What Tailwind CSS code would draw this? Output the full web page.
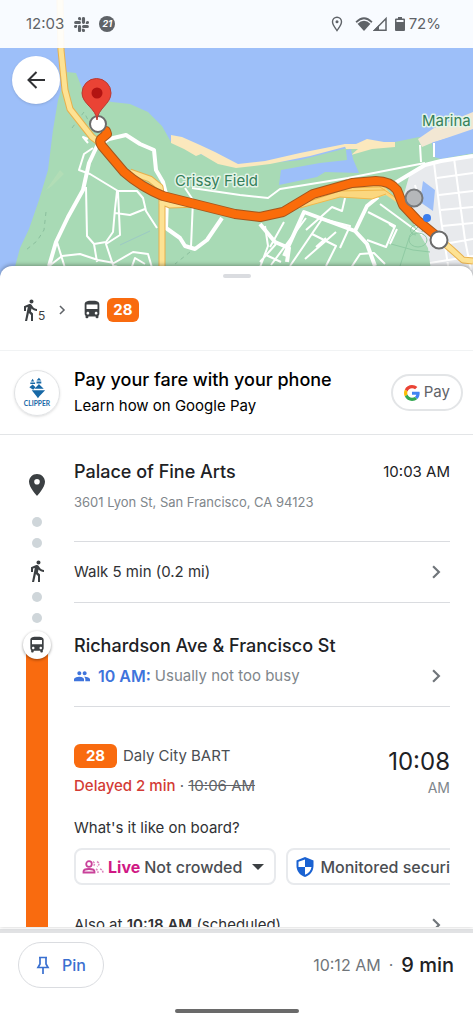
<!DOCTYPE html>
<html lang="en">
<head>
    <meta charset="UTF-8">
    <meta name="viewport" content="width=device-width, initial-scale=1.0">
    <title>Transit directions</title>
    <script src="https://cdn.jsdelivr.net/npm/@tailwindcss/browser@4"></script>
</head>
<body class="flex h-screen flex-col overflow-hidden bg-white font-['Inter',sans-serif] text-[#202124]">

    <!-- Shared icons -->
    <svg class="hidden" aria-hidden="true">
        <symbol id="walk" viewBox="0 0 24 24"><path d="M13.5 5.5c1.1 0 2-.9 2-2s-.9-2-2-2-2 .9-2 2 .9 2 2 2zM9.8 8.9L7 23h2.100l1.800-8 2.100 2v6h2v-7.500l-2.100-2 .600-3C14.800 12 16.800 13 19 13v-2c-1.900 0-3.500-1-4.300-2.400l-1-1.600c-.400-.600-1-1-1.700-1-.300 0-.500.100-.800.100L6 8.300V13h2V9.600l1.800-.700"/></symbol>
        <symbol id="bus" viewBox="0 0 24 24"><path d="M4 16c0 .88.390 1.670 1 2.220V20c0 .550.450 1 1 1h1c.550 0 1-.450 1-1v-1h8v1c0 .550.450 1 1 1h1c.550 0 1-.450 1-1v-1.780c.610-.550 1-1.340 1-2.220V6c0-3.500-3.580-4-8-4s-8 .500-8 4v10zm3.500 1c-.830 0-1.500-.670-1.500-1.500S6.670 14 7.500 14s1.500.670 1.500 1.500S8.330 17 7.500 17zm9 0c-.830 0-1.500-.670-1.500-1.500s.670-1.500 1.500-1.500 1.500.670 1.500 1.500-.670 1.500-1.500 1.500zM18 11H6V6h12v5z"/></symbol>
        <symbol id="chevron" viewBox="0 0 24 24"><path d="M8.500 5l7 7-7 7" fill="none" stroke="currentColor" stroke-width="2.600"/></symbol>
    </svg>

    <!-- Map with the status bar on top -->
    <header class="relative h-[278px] shrink-0">
        <svg class="absolute inset-0 h-full w-full" viewBox="0 0 473 278" preserveAspectRatio="xMidYMid slice" fill="none" role="img" aria-label="Route map">
            <path fill="#9dbff9" d="M0 0H473V278H0z"/>
            <path fill="#a8dab5" d="M67 72L76 73 82 88 92 98 112 102 130 104 148 112 162 126 171 142 205 156 240 166 300 160 347 148 395 142 419 137 432 142 434 157 441 159 473 153V278H12L20 248 29 229 39 200 48 170 53 130 58 100z"/>
            <path fill="#b9dfb8" opacity=".6" d="M46 190L60 170 64 174 52 186z"/>
            <!-- beach and lagoon -->
            <path fill="#fbe8bd" d="M171 135L182 137 200 145 215 152 238 164 265 161 300 153 345 144 348 146 310 156 270 164 236 168 218 164 201 154 196 156 184 149 171 143z"/>
            <path fill="#fbe8bd" d="M344 144L356 144 367 139 384 142 395 142 395 147 372 149 351 155 358 149 346 149z"/>
            <path fill="#9dbff9" d="M281 170L320 163 347 160 346 150 351 149 353 159 359 173 325 172 317 177 279 185z"/>
            <path fill="#f2e7d3" d="M418 139L434 128 473 112V131L434 142 422 147z"/>
            <path fill="#9dbff9" d="M432 143L473 129V153L441 158z"/>
            <!-- city blocks -->
            <path fill="#e8eaed" d="M410 173L434 161 473 154V278H432L428 248 410 218 404 194z"/>
            <path fill="#9dbff9" d="M423 181L435 190 433 211 420 202z"/>
            <g stroke="#fff" stroke-width="2">
                <path d="M434 163L441 220 450 278M454 158L465 240 471 270M437 178L473 173M439 195L473 191M441 210L473 207M442 226L473 223M444 244L473 239M430 263L473 256M419 200L415 185"/>
            </g>
            <!-- park roads -->
            <g stroke="#fff" stroke-linejoin="round" stroke-width="2">
                <path d="M88 139L83 137 88 143M93 148L84 154 79 170 90 174 118 191 137 191 143 198 146 211 157 228M86 187L87 236 94 244 106 242 113 232 115 209 117 191M115 213L130 215 145 209M118 192L120 235 106 244 113 265 125 278M94 244L97 262M57 242L65 268M48 267L62 256 80 254 98 260 114 263 133 252 148 254 155 278M185 188L193 200 191 247M192 188L240 195 268 198 280 189 348 178 425 163M115 266L130 272 135 258 145 264"/>
                <path d="M348 178V183M420 145L421 162M434 143V157M380 204L418 232 423 235M306 218L271 265M322 219L290 266M345 198L342 211 332 207 306 230M312 234L336 246 326 266M284 222L270 247M276 244L260 262M265 226L268 246 259 270M266 255L281 262M326 238L316 247M368 212L395 226 386 247 367 240M389 224L395 228M323 219L350 226 340 248M305 259L336 232M345 277L360 254 374 253 385 264M397 229L390 244"/>
            </g>
            <g stroke="#fff" stroke-linejoin="round" stroke-width="4">
                <path d="M49 266L56 242 68 217 83 190 89 163 97 146 109 139 126 135 140 144 154 150 156 170 163 182 167 198 166 228 180 238 185 246 195 249 207 240 222 218"/>
                <path d="M260 224L275 242 289 248 287 262M284 256L304 212 355 231 367 244 375 266M355 231L367 206 378 197"/>
                <path d="M395 183L425 165 441 161 473 156"/>
            </g>
            <g stroke="#8fcaa3" stroke-width="1"><path d="M391 244L413 250 430 252M400 266L410 235 420 225M409 240a9 7 0 1 0 18 0a9 7 0 1 0-18 0M416 235a6 5 0 1 1 6-3"/></g>
            <path stroke="#8abf9d" stroke-dasharray="4 4" d="M46 212L44 230 37 241 26 250M72 128L84 112 88 120M190 252L175 264"/>
            <path stroke="#9cc9c4" d="M120 245L150 231"/>
            <!-- highway -->
            <g stroke-linejoin="round">
                <path stroke="#e8b04c" stroke-width="7" d="M60 0L61 50 65 90 70 109 92 137 104 146M130 172L150 179 160 187 162 200V278M160 201L170 205 200 204M436 236L452 250 463 260 473 261"/>
                <path stroke="#fde293" stroke-width="5" d="M60 0L61 50 65 90 70 109 92 137 104 146M130 172L150 179 160 187 162 200V278M160 201L170 205 200 204M436 236L452 250 463 260 473 261"/>
                <path fill="#fbd77f" d="M262 214L290 206 330 186 380 182 402 206 386 195 372 199 340 197 300 208 262 218z"/>
                <path stroke="#f2b84b" stroke-width="1" d="M262 213L295 206 340 191 385 190M300 208L340 197 372 199 386 194M310 199L345 188 380 187 396 198"/>
            </g>
            <!-- bus route -->
            <g stroke-linecap="round" stroke-linejoin="round">
                <path stroke="#a4561d" stroke-width="10" d="M106 131L107 134 101 139Q99 142 102 146L124 172Q141 187 163 196L235 214 260 217 283 212 313 194 352 183 376 181Q390 181 397 190L403 205 417 220 439 238"/>
                <path stroke="#fa6c0a" stroke-width="8" d="M106 131L107 134 101 139Q99 142 102 146L124 172Q141 187 163 196L235 214 260 217 283 212 313 194 352 183 376 181Q390 181 397 190L403 205 417 220 439 238"/>
            </g>
            <circle cx="98" cy="124" r="8" fill="#fff" stroke="#6b6b6b" stroke-width="2"/>
            <circle cx="414" cy="198" r="8.500" fill="#b5b7ba" stroke="#77797c" stroke-width="2"/>
            <circle cx="439" cy="240" r="8.500" fill="#fff" stroke="#6b6b6b" stroke-width="2"/>
            <circle cx="427" cy="218" r="4" fill="#3b7ded"/>
            <path fill="#ea4335" stroke="#b93a32" d="M97 120C96 108 82 104 82 93a14.500 14.500 0 0 1 29 0C111 104 98 108 97 120z"/>
            <circle cx="97" cy="93" r="5.500" fill="#b31412"/>
            <g font-family="Inter, sans-serif" font-size="15" fill="#35805a" stroke="#e4f4e8" stroke-width="3" stroke-linejoin="round" paint-order="stroke">
                <text x="175" y="186">Crissy Field</text>
                <text x="422" y="126">Marina</text>
            </g>
        </svg>

        <div class="relative flex h-12 items-center justify-between bg-white/93 pr-8 pl-[26px] text-[15px] text-[#5f6368]">
            <div class="flex items-center gap-2.5">
                <span>12:03</span>
                <svg class="size-[15px]" viewBox="0 0 24 24" fill="#5f6368" aria-label="Slack"><path d="M5.042 15.165a2.528 2.528 0 1 1-2.520-2.523h2.520v2.523zm1.271 0a2.527 2.527 0 0 1 5.042 0v6.313a2.528 2.528 0 1 1-5.042 0v-6.313zM8.834 5.042a2.528 2.528 0 1 1 2.521-2.520v2.520H8.834zm0 1.271a2.528 2.528 0 0 1 0 5.042H2.522a2.528 2.528 0 0 1 0-5.042h6.312zM18.956 8.834a2.528 2.528 0 1 1 2.522 2.521h-2.522V8.834zm-1.268 0a2.528 2.528 0 0 1-5.043 0V2.522a2.528 2.528 0 0 1 5.043 0v6.312zM15.165 18.956a2.528 2.528 0 1 1-2.520 2.522v-2.522h2.520zm0-1.268a2.527 2.527 0 0 1 0-5.043h6.313a2.528 2.528 0 0 1 0 5.043h-6.313z"/></svg>
                <span class="flex size-4 items-center justify-center rounded-full bg-[#5f6368] text-[9px] font-bold text-white italic">21</span>
            </div>
            <div class="flex items-center gap-1">
                <svg class="mr-2 h-4 w-3" viewBox="0 0 12 16" fill="none" stroke="#5f6368" stroke-width="1.400" aria-label="Location"><path d="M6 14.500C4 11.500 1.500 9 1.500 5.800a4.500 4.500 0 0 1 9 0C10.500 9 8 11.500 6 14.500z"/><circle cx="6" cy="5.800" r="1.500" fill="#5f6368" stroke="none"/></svg>
                <svg class="-mr-1 h-4 w-[18px]" viewBox="0 0 18 16" aria-label="Wi-Fi"><path fill="#5f6368" d="M.500 5.500Q9-3 17.500 5.500L9 15z"/><path stroke="#f8faff" stroke-width="1.200" d="M2 7.500Q9 .500 16 7.500" fill="none"/></svg>
                <svg class="h-4 w-3.5" viewBox="0 0 14 16" aria-label="Signal"><path d="M1.500 14.300H13V2.500z" fill="none" stroke="#5f6368" stroke-width="1.500"/><path fill="#5f6368" d="M0 15L6 9V15z"/></svg>
                <svg class="ml-1 h-4 w-2.5" viewBox="0 0 10 16" aria-label="Battery"><path fill="#5f6368" d="M3 1H7V2.500H9Q10 2.500 10 3.500V14Q10 15 9 15H1Q0 15 0 14V3.500Q0 2.500 1 2.500H3z"/><path fill="#f8faff" d="M1.500 4H8.500V6H1.500z"/></svg>
                <span>72%</span>
            </div>
        </div>
        <button type="button" aria-label="Back" class="relative mt-2 ml-3 flex size-12 items-center justify-center rounded-full bg-white shadow">
            <svg class="size-6" viewBox="0 0 24 24" fill="none" stroke="#303134" stroke-width="2"><path d="M21 12H4.500M12.500 4L4.500 12 12.500 20"/></svg>
        </button>
    </header>

    <!-- Bottom sheet -->
    <main class="relative -mt-3 flex min-h-0 flex-1 flex-col overflow-hidden rounded-t-xl bg-white shadow-[0_-1px_4px_#0005]">
        <div class="mx-auto mt-2 h-1 w-7 shrink-0 rounded-full bg-[#dadce0]"></div>

        <section class="flex h-[73px] shrink-0 items-center border-b border-[#f1f3f4] pb-2 pl-[18px] text-[#3c4043]">
            <svg class="size-6 fill-current" aria-label="Walk"><use href="#walk"/></svg>
            <span class="-ml-1 mt-3 text-xs">5</span>
            <svg class="mr-3 ml-2.5 size-3.5 text-[#5f6368]" aria-hidden="true"><use href="#chevron"/></svg>
            <svg class="size-[22px] fill-current" aria-label="Bus"><use href="#bus"/></svg>
            <span class="ml-1 rounded-md bg-[#f96b0f] px-1.5 text-[15px] leading-6 font-bold text-white">28</span>
        </section>

        <section class="flex h-[84px] shrink-0 items-center border-b border-[#e3e5e7] pr-2.5 pl-3.5">
            <svg class="size-[46px] shrink-0 rounded-full border border-[#e0e2e4] shadow-sm" viewBox="0 0 46 46" role="img" aria-label="Clipper">
                <g fill="#1768a6">
                    <path d="M18.500 8L20 11H16.500zM16 12H21V13.500H16zM25 7L27.500 10H22.500zM22.500 11H27.500V13H22.500zM18.500 14L21.500 17 19 19.500 15 17zM25 13.500L30 18.500H20.500z"/>
                    <path d="M17.500 20H31.500L25.500 26.500 24 28.500 22.500 26.500z"/>
                </g>
                <text x="23" y="37" text-anchor="middle" font-family="Lato, sans-serif" font-size="7" font-weight="700" fill="#1768a6">CLIPPER</text>
            </svg>
            <div class="ml-3.5 min-w-0 flex-1 text-black">
                <h2 class="text-lg leading-6 font-medium">Pay your fare with your phone</h2>
                <p class="mt-0.5 text-[15px] leading-6">Learn how on Google Pay</p>
            </div>
            <button type="button" class="flex h-[37px] shrink-0 items-center gap-1 rounded-full border-2 border-[#e3e5e7] px-[11px] text-[15px] text-[#5f6368]">
                <svg class="size-4" viewBox="0 0 48 48" aria-label="Google"><path fill="#EA4335" d="M24 9.500c3.540 0 6.710 1.220 9.210 3.600l6.850-6.850C35.900 2.380 30.470 0 24 0 14.620 0 6.510 5.380 2.560 13.220l7.980 6.190C12.430 13.720 17.740 9.500 24 9.500z"/><path fill="#4285F4" d="M46.980 24.550c0-1.570-.150-3.090-.380-4.550H24v9.020h12.940c-.580 2.960-2.260 5.480-4.780 7.180l7.730 6c4.510-4.180 7.090-10.360 7.090-17.650z"/><path fill="#FBBC05" d="M10.530 28.590c-.480-1.450-.760-2.990-.760-4.590s.270-3.140.760-4.590l-7.980-6.190C.920 16.460 0 20.120 0 24c0 3.880.920 7.540 2.560 10.780l7.970-6.190z"/><path fill="#34A853" d="M24 48c6.480 0 11.930-2.130 15.890-5.810l-7.730-6c-2.150 1.450-4.920 2.300-8.160 2.300-6.260 0-11.570-4.220-13.470-9.910l-7.980 6.190C6.510 42.620 14.620 48 24 48z"/></svg>
                Pay
            </button>
        </section>

        <!-- Itinerary -->
        <section class="flex min-h-0 flex-1 overflow-hidden">
            <div class="flex w-[74px] shrink-0 flex-col items-center pt-[38px]">
                <svg class="h-6 w-[18px] shrink-0" viewBox="0 0 18 24" fill="#3c4043" aria-label="Start"><path d="M9 1C4.600 1 1 4.500 1 8.800 1 14.500 9 23 9 23s8-8.500 8-14.200C17 4.500 13.400 1 9 1zm0 10.500a2.800 2.800 0 1 1 0-5.600 2.800 2.800 0 0 1 0 5.600z"/></svg>
                <span class="mt-5 size-2.5 shrink-0 rounded-full bg-[#cfd6da]"></span>
                <span class="mt-[11px] size-2.5 shrink-0 rounded-full bg-[#cfd6da]"></span>
                <svg class="mt-[11px] mb-[9px] size-6 shrink-0 fill-[#3c4043]" aria-label="Walk"><use href="#walk"/></svg>
                <span class="size-2.5 shrink-0 rounded-full bg-[#cfd6da]"></span>
                <span class="mt-[11px] size-2.5 shrink-0 rounded-full bg-[#cfd6da]"></span>
                <span class="relative z-10 mt-2 flex size-7 shrink-0 items-center justify-center rounded-full bg-white shadow-[0_1px_3px_#0006]">
                    <svg class="size-5 fill-[#3c4043]" aria-label="Bus"><use href="#bus"/></svg>
                </span>
                <span class="-mt-3 w-[22px] flex-1 bg-[#f96b0f]"></span>
            </div>

            <div class="min-w-0 flex-1 pr-[23px]">
                <div class="flex h-[107px] justify-between border-b border-[#dadce0] pt-[25px]">
                    <div>
                        <h2 class="text-lg leading-6 font-medium">Palace of Fine Arts</h2>
                        <p class="mt-2 text-[13px] leading-5 text-[#80868b]">3601 Lyon St, San Francisco, CA 94123</p>
                    </div>
                    <span class="text-[15px] leading-6">10:03 AM</span>
                </div>
                <a href="#walk" class="flex h-[61px] items-center justify-between border-b border-[#dadce0] text-[15px] text-[#303134]">
                    Walk 5 min (0.2 mi)
                    <svg class="mr-1 size-5 text-[#70757a]" aria-hidden="true"><use href="#chevron"/></svg>
                </a>
                <div class="h-[104px] border-b border-[#dadce0] pt-[31px]">
                    <h2 class="text-lg leading-6 font-medium">Richardson Ave &amp; Francisco St</h2>
                    <a href="#crowding" class="mt-1.5 flex items-center text-[15px] leading-6 text-[#80868b]">
                        <svg class="mr-2 size-4 fill-[#3f74dc]" viewBox="0 0 24 24" aria-hidden="true"><path d="M16 11c1.660 0 3-1.340 3-3s-1.340-3-3-3-3 1.340-3 3 1.340 3 3 3zm-8 0c1.660 0 3-1.340 3-3S9.660 5 8 5 5 6.340 5 8s1.340 3 3 3zm0 2c-2.700 0-8 1.300-8 4v3h15v-3c0-2.700-4.300-4-7-4zm8 0c-.300 0-.700 0-1 .100 1.200.900 2 2 2 3.900v3h7v-3c0-2.700-5.300-4-8-4z"/></svg>
                        <b class="mr-1 text-base font-semibold text-[#3f74dc]">10 AM:</b> Usually not too busy
                        <svg class="mr-1 ml-auto size-5 text-[#70757a]" aria-hidden="true"><use href="#chevron"/></svg>
                    </a>
                </div>
                <div class="flex justify-between pt-[37px]">
                    <div class="text-[15px] leading-6 text-[#5f6368]">
                        <p class="flex items-center gap-1.5 text-[#4b4e52]"><span class="w-[43px] rounded-md bg-[#f96b0f] text-center font-bold text-white">28</span>Daly City BART</p>
                        <p class="mt-1.5"><span class="font-medium text-[#d33b35]">Delayed 2 min</span> · <s>10:06 AM</s></p>
                    </div>
                    <p class="text-right text-sm text-[#80868b]"><span class="mt-0.5 block text-2xl text-[#202124]">10:08</span>AM</p>
                </div>
                <p class="mt-[18px] text-[15px] leading-6 text-[#303134]">What's it like on board?</p>
                <div class="mt-2 flex gap-2.5 overflow-hidden text-base font-medium whitespace-nowrap text-[#4b4e52]">
                    <button type="button" class="flex h-[37px] shrink-0 items-center rounded-lg border-2 border-[#e8eaed] pr-2.5 pl-1.5">
                        <svg class="mr-1 h-4 w-[22px]" viewBox="0 0 22 16" fill="none" stroke="#c9429a" stroke-width="1.800" aria-hidden="true"><circle cx="7" cy="5" r="2.800"/><path d="M1.500 13.500V12.500C1.500 10.500 5 10 7 10s5.500.500 5.500 2.500v1z"/><path stroke-dasharray="2 1" stroke-width="1.500" opacity=".65" d="M11 2.500Q14 5 11 7.500M15 2.500Q19 5 15 7.500M14 10Q16 11 16 14M18 10Q21 11 21 14"/></svg>
                        <b class="mr-1 font-bold text-[#d01884]">Live</b>Not crowded
                        <svg class="ml-2.5 h-2 w-3" viewBox="0 0 12 8" fill="#3c4043" aria-hidden="true"><path d="M0 1H12L6 7z"/></svg>
                    </button>
                    <button type="button" class="flex h-[37px] shrink-0 items-center gap-1.5 rounded-lg border-2 border-[#e8eaed] px-2">
                        <svg class="h-5 w-[18px]" viewBox="0 0 18 20" aria-hidden="true"><path fill="#1a62d2" d="M9 0L17.500 3.500V9C17.500 14 14 18.500 9 20 4 18.500.500 14 .500 9V3.500z"/><path fill="#fff" d="M9 2.500V10H2.500V4.800zM9 10H15.500C15 13.500 12.500 16.500 9 17.800z"/></svg>
                        Monitored security
                    </button>
                </div>
                <a href="#later" class="mt-7 flex items-center justify-between text-[15px] leading-6 text-[#303134]">
                    <span>Also at <b class="font-semibold">10:18 AM</b> (scheduled)</span>
                    <svg class="mr-1 size-5 shrink-0 text-[#70757a]" aria-hidden="true"><use href="#chevron"/></svg>
                </a>
            </div>
        </section>
    </main>

    <footer class="mt-0.5 shrink-0 border-t-4 border-[#e1e2e4]">
        <div class="flex items-center justify-between pt-[9px] pr-[19px] pl-[18px]">
            <button type="button" class="flex h-[46px] items-center gap-3 rounded-full border border-[#dadce0] px-[17px] text-base font-medium text-[#3a70d0]">
                <svg class="h-[18px] w-3.5" viewBox="0 0 14 18" fill="none" stroke="#3a70d0" stroke-width="1.700" aria-hidden="true"><path d="M3 1.500H11M4 1.500V8L2 11.500H12L10 8V1.500M7 12V18"/></svg>
                Pin
            </button>
            <p class="flex items-center gap-2 text-base text-[#70757a]">10:12 AM <span>·</span> <b class="text-xl font-medium text-[#202124]">9 min</b></p>
        </div>
        <div class="mx-auto mt-[21px] mb-3 h-1 w-[124px] rounded-full bg-[#6a6a6a]"></div>
    </footer>
</body>
</html>
